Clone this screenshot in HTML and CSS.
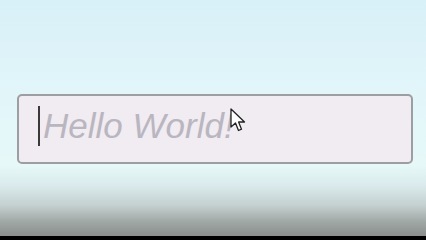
FILE: index.html
```html
<!DOCTYPE html>
<html>
<head>
<meta charset="utf-8">
<link rel="stylesheet" href="styles.css">
</head>
<body>
<div class="scene">
  <div class="field">
    <span class="caret"></span>
    <span class="placeholder">Hello World!</span>
    <svg class="pointer" width="16" height="26" viewBox="0 0 16 26">
      <path d="M1 1 L1 19 L5.5 15 L8.5 22.5 L11.5 21.2 L8.6 14 L14.5 14 Z" fill="#ffffff" stroke="#222222" stroke-width="1.3" stroke-linejoin="round"/>
    </svg>
  </div>
</div>
<div class="bottom"></div>
</body>
</html>
```
FILE: styles.css
```css
html, body {
  margin: 0;
  padding: 0;
}
body {
  width: 426px;
  height: 240px;
  overflow: hidden;
  background: #000;
}
.scene {
  height: 236px;
  padding-top: 94px;
  box-sizing: border-box;
  background: linear-gradient(to bottom, #d8f0f8 0%, #e2f6fa 40%, #e6f8f8 70%, #dcecee 78%, #c4d0d0 87%, #a0a8a6 94%, #8a8e8c 100%);
}
.field {
  position: relative;
  margin-left: 17px;
  width: 396px;
  height: 70px;
  box-sizing: border-box;
  border: 2px solid #9c9ea2;
  border-radius: 5px;
  background: #f1ebf2;
  display: flex;
  align-items: center;
  padding-left: 19px;
  padding-bottom: 7px;
  gap: 3px;
}
.caret {
  width: 2px;
  height: 40px;
  background: #3a3a3a;
}
.placeholder {
  font-family: "Liberation Sans", Arial, sans-serif;
  font-style: italic;
  font-size: 35px;
  color: #b9b6c0;
  line-height: 40px;
}
.pointer {
  position: absolute;
  left: 211px;
  top: 12px;
}
.bottom {
  height: 4px;
  background: #000;
}
```
